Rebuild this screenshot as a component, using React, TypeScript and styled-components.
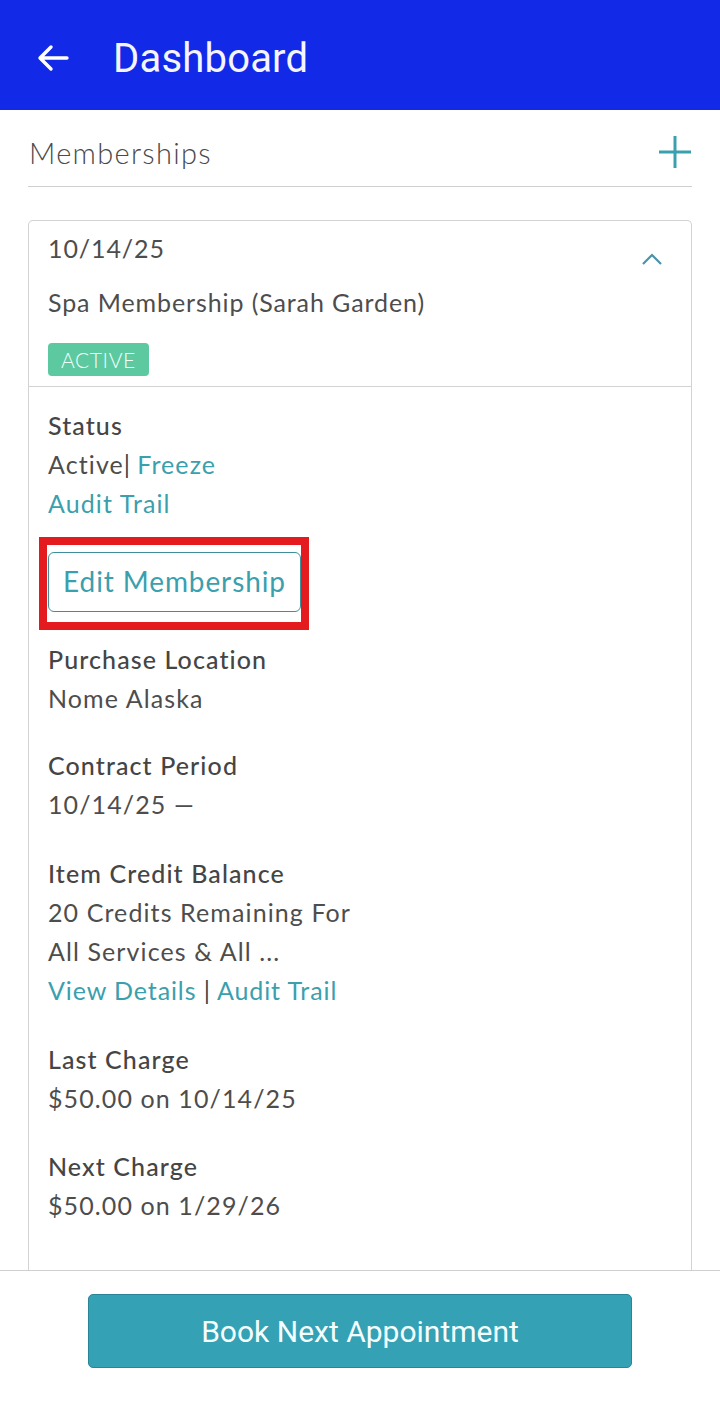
import React from "react";
import styled, { createGlobalStyle } from "styled-components";

const Global = createGlobalStyle`
  html, body { margin: 0; padding: 0; background: #fff; }
  body { font-family: Lato, "Open Sans", sans-serif; color: #444; }
  * { box-sizing: border-box; }
`;

const Screen = styled.div`
  height: 100vh;
  display: flex;
  flex-direction: column;
  overflow: hidden;
`;

const TopBar = styled.header`
  flex: none;
  height: 110px;
  background: #1229e8;
  display: flex;
  align-items: center;
  padding: 6px 0 0 36px;
  gap: 43px;
`;

const Title = styled.h1`
  margin: 0;
  font-family: Roboto, sans-serif;
  font-weight: 400;
  font-size: 40px;
  color: #f4f5ff;
  letter-spacing: 0.2px;
`;

const Scroll = styled.main`
  flex: 1;
  overflow: hidden;
  padding: 0 28px;
`;

const SectionHead = styled.div`
  height: 77px;
  display: flex;
  align-items: center;
  justify-content: space-between;
  border-bottom: 1.5px solid #cfcfcf;
  padding-top: 8px;
`;

const SectionTitle = styled.h2`
  margin: 0;
  font-weight: 300;
  font-size: 29px;
  letter-spacing: 1.3px;
  color: #4a4a4a;
  padding-left: 1px;
`;

const Card = styled.section`
  margin-top: 33px;
  border: 1.5px solid #d3d3d3;
  border-radius: 5px;
  border-bottom: none;
  border-bottom-left-radius: 0;
  border-bottom-right-radius: 0;
  min-height: 1200px;
`;

const CardTop = styled.div`
  position: relative;
  padding: 8px 19px 10px;
  border-bottom: 1.5px solid #d3d3d3;
`;

const Line = styled.div<{ $size?: number; $weight?: number; $mt?: number; $ls?: number }>`
  font-size: ${(p) => p.$size ?? 25}px;
  font-weight: ${(p) => p.$weight ?? 400};
  letter-spacing: ${(p) => p.$ls ?? 1.1}px;
  line-height: 39px;
  margin-top: ${(p) => p.$mt ?? 0}px;
  color: ${(p) => ((p.$weight ?? 400) > 400 ? "#454545" : "#4d4d4d")};
  white-space: nowrap;
`;

const Chevron = styled.span`
  position: absolute;
  right: 28px;
  top: 31px;
  display: flex;
`;

const Badge = styled.span`
  display: inline-flex;
  align-items: center;
  height: 33px;
  margin-top: 21px;
  padding: 0 13px;
  border-radius: 4px;
  background: #5cc9a0;
  color: #f2fff9;
  font-size: 21px;
  font-weight: 300;
  letter-spacing: 0.6px;
`;

const Body = styled.div`
  padding: 19px 19px 0;
`;

const Block = styled.div<{ $mt?: number }>`
  margin-top: ${(p) => p.$mt ?? 28}px;
`;

const Link = styled.a`
  color: #3aa0ae;
  text-decoration: none;
`;

const Sep = styled.span`
  color: #444;
  margin: 0 6px 0 0;
`;

const Highlight = styled.div`
  position: relative;
  margin-top: 29px;
  display: inline-block;
  &::after {
    content: "";
    position: absolute;
    left: -9px;
    top: -15px;
    right: -8px;
    bottom: -18px;
    border: 8px solid #e31b1f;
    pointer-events: none;
  }
`;

const OutlineButton = styled.button`
  display: block;
  height: 60px;
  width: 253px;
  border: 1.5px solid #3d8f9c;
  border-radius: 6px;
  background: #fff;
  color: #3aa0ae;
  font-family: inherit;
  font-size: 28px;
  font-weight: 400;
  letter-spacing: 0.9px;
  padding: 0 0 2px;
`;

const Footer = styled.footer`
  flex: none;
  height: 153px;
  border-top: 1.5px solid #cfcfcf;
  display: flex;
  justify-content: center;
  padding-top: 23px;
`;

const PrimaryButton = styled.button`
  width: 544px;
  height: 74px;
  background: #34a1b5;
  border: 1.5px solid #2a8597;
  border-radius: 5px;
  color: #f5feff;
  font-family: Roboto, sans-serif;
  font-size: 30px;
  font-weight: 400;
  padding: 0;
`;

const Icon = styled.svg`
  display: block;
`;

export default function App() {
  return (
    <>
      <Global />
      <Screen>
        <TopBar>
          <Icon width="34" height="30" viewBox="0 0 34 30" fill="none">
            <path d="M31 15H4M15 4L4 15l11 11" stroke="#fff" strokeWidth="3.4" strokeLinecap="round" strokeLinejoin="round" />
          </Icon>
          <Title>Dashboard</Title>
        </TopBar>
        <Scroll>
          <SectionHead>
            <SectionTitle>Memberships</SectionTitle>
            <Icon width="34" height="34" viewBox="0 0 34 34" fill="none">
              <path d="M17 1v32M1 17h32" stroke="#3aa0ae" strokeWidth="3" />
            </Icon>
          </SectionHead>
          <Card>
            <CardTop>
              <Line $ls={0.9}>10/14/25</Line>
              <Chevron>
                <Icon width="22" height="14" viewBox="0 0 22 14" fill="none">
                  <path d="M2 12L11 3l9 9" stroke="#4a93ab" strokeWidth="2.2" />
                </Icon>
              </Chevron>
              <Line $ls={0.9} $mt={15}>Spa Membership (Sarah Garden)</Line>
              <Badge>ACTIVE</Badge>
            </CardTop>
            <Body>
              <Block $mt={0}>
                <Line $weight={500}>Status</Line>
                <Line>
                  Active<Sep>|</Sep><Link>Freeze</Link>
                </Line>
                <Line><Link>Audit Trail</Link></Line>
              </Block>
              <Highlight>
                <OutlineButton>Edit Membership</OutlineButton>
              </Highlight>
              <Block>
                <Line $weight={500}>Purchase Location</Line>
                <Line>Nome Alaska</Line>
              </Block>
              <Block>
                <Line $weight={500}>Contract Period</Line>
                <Line>10/14/25 —</Line>
              </Block>
              <Block $mt={30}>
                <Line $weight={500}>Item Credit Balance</Line>
                <Line>20 Credits Remaining For</Line>
                <Line>All Services &amp; All ...</Line>
                <Line $ls={0.9}>
                  <Link>View Details</Link> <Sep>|</Sep><Link>Audit Trail</Link>
                </Line>
              </Block>
              <Block $mt={30}>
                <Line $weight={500}>Last Charge</Line>
                <Line>$50.00 on 10/14/25</Line>
              </Block>
              <Block $mt={29}>
                <Line $weight={500}>Next Charge</Line>
                <Line>$50.00 on 1/29/26</Line>
              </Block>
            </Body>
          </Card>
        </Scroll>
        <Footer>
          <PrimaryButton>Book Next Appointment</PrimaryButton>
        </Footer>
      </Screen>
    </>
  );
}
